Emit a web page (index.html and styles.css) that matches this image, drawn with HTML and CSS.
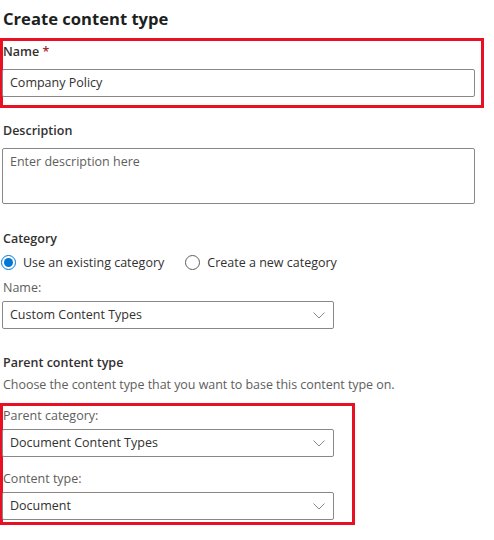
FILE: index.html
```html
<!DOCTYPE html>
<html lang="en">
<head>
<meta charset="utf-8">
<title>Create content type</title>
<link rel="stylesheet" href="styles.css">
</head>
<body>
<div class="page">
  <h1 class="title">Create content type</h1>

  <section class="marked marked-name">
    <div class="label strong">Name <span class="req">*</span></div>
    <div class="field field-wide">Company Policy</div>
  </section>

  <div class="label strong desc-label">Description</div>
  <div class="field field-wide textarea placeholder">Enter description here</div>

  <div class="label strong cat-label">Category</div>
  <div class="radios">
    <label class="radio"><span class="dot checked"></span>Use an existing category</label>
    <label class="radio"><span class="dot"></span>Create a new category</label>
  </div>
  <div class="label sub name-label">Name:</div>
  <div class="field select">Custom Content Types<svg class="chev" width="12" height="7" viewBox="0 0 12 7"><path d="M0.5 0.5 L6 6 L11.5 0.5" fill="none" stroke="#8a8886" stroke-width="1"/></svg></div>

  <div class="label strong parent-label">Parent content type</div>
  <div class="label sub help">Choose the content type that you want to base this content type on.</div>

  <section class="marked marked-parent">
    <div class="label sub">Parent category:</div>
    <div class="field select">Document Content Types<svg class="chev" width="12" height="7" viewBox="0 0 12 7"><path d="M0.5 0.5 L6 6 L11.5 0.5" fill="none" stroke="#8a8886" stroke-width="1"/></svg></div>
    <div class="label sub ct-label">Content type:</div>
    <div class="field select">Document<svg class="chev" width="12" height="7" viewBox="0 0 12 7"><path d="M0.5 0.5 L6 6 L11.5 0.5" fill="none" stroke="#8a8886" stroke-width="1"/></svg></div>
  </section>
</div>
</body>
</html>
```

FILE: styles.css
```css
* { box-sizing: border-box; }
html, body { margin: 0; padding: 0; background: #ffffff; }
body {
  font-family: "Open Sans", "Noto Sans", "Liberation Sans", sans-serif;
  font-size: 12.5px;
  color: #323130;
}
.page {
  padding: 7px 3px 20px 3px;
  display: flex;
  flex-direction: column;
  align-items: flex-start;
}
.title {
  margin: 0;
  font-size: 16.6px;
  font-weight: 700;
  line-height: 24px;
  color: #201f1e;
}
.marked {
  border: 3px solid #e81123;
  margin-left: -3px;
  display: flex;
  flex-direction: column;
  align-items: flex-start;
}
.marked-name {
  width: 484px;
  margin-top: 7px;
  padding: 1px 0 8px 0;
}
.marked-name .field { margin-top: 7px; }
.label {
  line-height: 20px;
  height: 20px;
  white-space: nowrap;
}
.strong { font-weight: 600; color: #323130; }
.sub { color: #605e5c; font-weight: 400; }
.req { color: #a4262c; }
.field {
  border: 1px solid #8a8886;
  border-radius: 2px;
  height: 28px;
  line-height: 26px;
  padding: 0 7px;
  color: #323130;
  background: #fff;
}
.field-wide { width: 473px; margin-left: -1px; }
.desc-label { margin-top: 13px; }
.textarea {
  margin-top: 7px;
  height: 56px;
  line-height: 26px;
}
.placeholder { color: #605e5c; }
.cat-label { margin-top: 25px; }
.radios {
  margin-top: 3px;
  display: flex;
  gap: 23px;
  height: 20px;
  align-items: center;
}
.radio {
  display: flex;
  align-items: center;
  gap: 7px;
  color: #323130;
  margin-left: -2px;
}
.dot {
  width: 15px;
  height: 15px;
  border: 1px solid #605e5c;
  border-radius: 50%;
  display: inline-flex;
  align-items: center;
  justify-content: center;
}
.dot.checked { border-color: #0078d4; }
.dot.checked::after {
  content: "";
  width: 9px;
  height: 9px;
  border-radius: 50%;
  background: #0078d4;
}
.name-label { margin-top: 6px; }
.select {
  width: 332px;
  margin-top: 3px;
  margin-left: -1px;
  display: flex;
  align-items: center;
  justify-content: space-between;
  padding-right: 8px;
}
.chev { display: block; }
.parent-label { margin-top: 24px; }
.help { margin-top: 2px; letter-spacing: -0.05px; }
.marked-parent {
  width: 355px;
  margin-top: 8px;
  padding: 0 0 2px 0;
}
.ct-label { margin-top: 12px; }
```
